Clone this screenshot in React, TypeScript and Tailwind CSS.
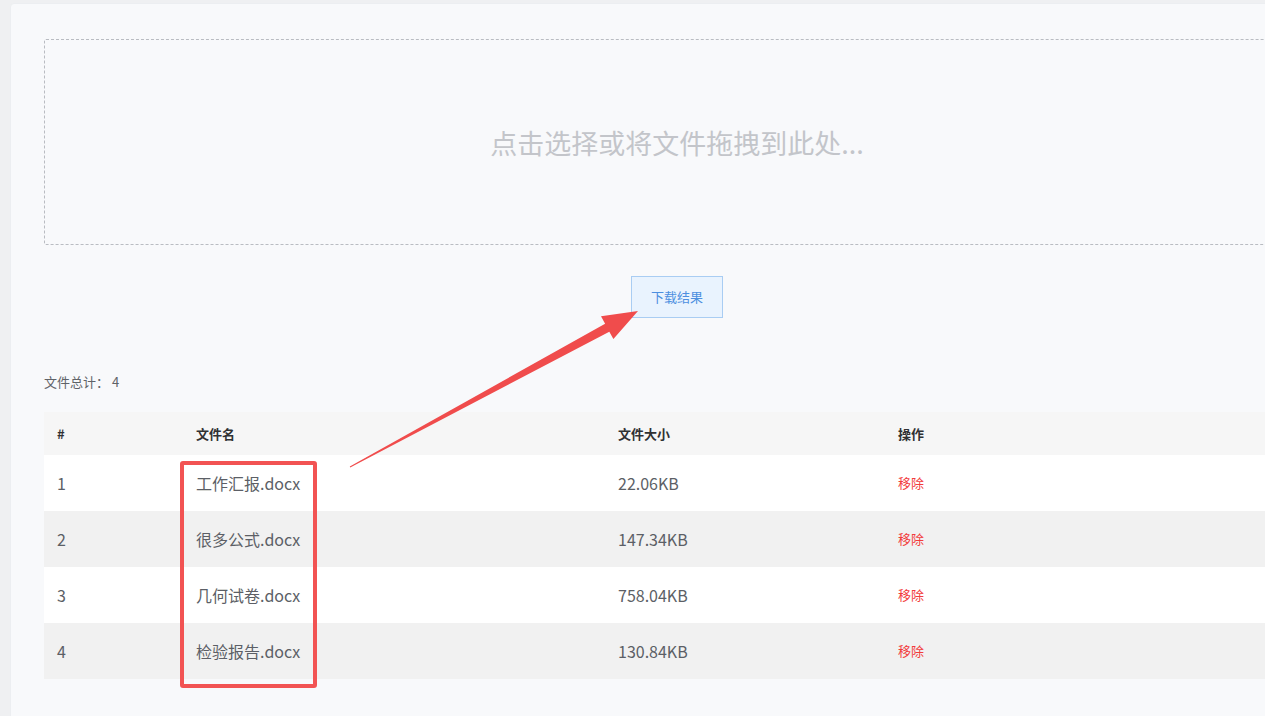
import React from 'react';

interface FileRow {
  id: number;
  name: string;
  size: string;
}

const files: FileRow[] = [
  { id: 1, name: '工作汇报.docx', size: '22.06KB' },
  { id: 2, name: '很多公式.docx', size: '147.34KB' },
  { id: 3, name: '几何试卷.docx', size: '758.04KB' },
  { id: 4, name: '检验报告.docx', size: '130.84KB' },
];

const font = { fontFamily: '"Noto Sans CJK SC", "Noto Sans", sans-serif' };

const App: React.FC = () => {
  return (
    <div className="relative w-[1265px] h-[716px] overflow-hidden bg-[#eff0f2] pt-[3px] pl-[10px]" style={font}>
      <div className="w-[1334px] h-[740px] bg-[#f8f9fb] rounded-[4px] border border-[#eceef1] px-[33px] pt-[35px]">
        {/* upload area */}
        <div className="h-[206px] border border-dashed border-[#b9bcc2] rounded-[2px] flex items-center justify-center">
          <span className="text-[27px] text-[#c3c5ca] leading-none">点击选择或将文件拖拽到此处...</span>
        </div>

        <div className="flex justify-center mt-[31px]">
          <button className="w-[92px] h-[42px] bg-[#e9f3fe] border border-[#a9cdf3] text-[13px] text-[#4d8fe0]">
            下载结果
          </button>
        </div>

        <p className="mt-[57px] text-[13px] text-[#5f6368] leading-none">文件总计：&nbsp;4</p>

        <div className="mt-[24px]">
          <div className="flex h-[43px] items-center bg-[#f6f6f6] text-[13px] font-bold text-[#303133]">
            <div className="w-[139px] pl-[13px]">#</div>
            <div className="w-[422px] pl-[13px]">文件名</div>
            <div className="w-[280px] pl-[13px]">文件大小</div>
            <div className="flex-1 pl-[13px]">操作</div>
          </div>
          {files.map((f, i) => (
            <div
              key={f.id}
              className={`flex h-[56px] items-center text-[16px] text-[#5c5f66] ${i % 2 === 0 ? 'bg-white' : 'bg-[#f1f1f1]'}`}
            >
              <div className="w-[139px] pl-[13px]">{f.id}</div>
              <div className="w-[422px] pl-[13px]">{f.name}</div>
              <div className="w-[280px] pl-[13px]">{f.size}</div>
              <div className="flex-1 pl-[13px] text-[13px] text-[#f23c3c]">移除</div>
            </div>
          ))}
        </div>
      </div>

      {/* red annotation */}
      <div className="absolute left-[180px] top-[461px] w-[137px] h-[227px] border-[4px] border-[#f25353] rounded-[3px]" />
      <svg className="absolute left-0 top-0 pointer-events-none" width="1265" height="716">
        <polygon
          points="349.8,466.6 605.1,323.7 601,316.3 638,311 613.4,339.1 609.3,331.7 350.2,467.4"
          fill="#f04c4c"
        />
      </svg>
    </div>
  );
};

export default App;
